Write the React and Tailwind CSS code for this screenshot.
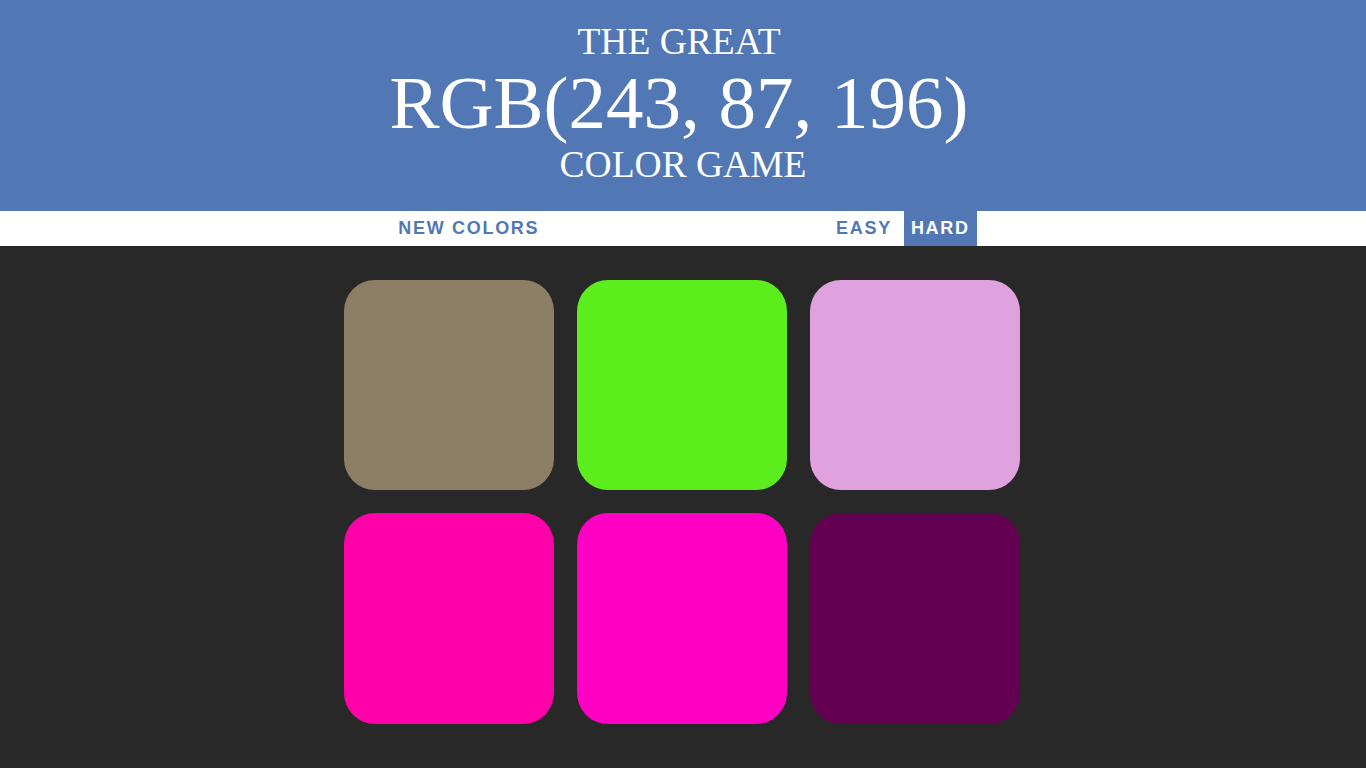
import React from "react";

const squares = ["#8c7f66", "#5ced1c", "#e0a2df", "#ff00a9", "#ff00c4", "#630051"];

function App() {
  return (
    <div className="min-h-screen bg-[#282828]">
      {/* Title */}
      <h1 className="bg-[#5277b5] pt-[22px] pb-[26px] text-center uppercase font-normal text-white font-['Liberation_Serif',serif]">
        <div className="pr-[8px] text-[37.5px] leading-[40px]">The Great</div>
        <div className="pr-[8px] text-[75px] leading-[82.5px]">RGB(243, 87, 196)</div>
        <div className="text-[37.5px] leading-[40px]">Color Game</div>
      </h1>

      {/* Stripe */}
      <div className="flex h-[35px] justify-center bg-white pl-[2px] font-['Liberation_Sans',sans-serif] text-[18px] font-bold uppercase tracking-[1.7px] text-[#5277b5]">
        <button className="px-[7px] uppercase">New Colors</button>
        <span className="ml-[5px] w-[20%]"></span>
        <button className="ml-[5px] px-[7px] uppercase">Easy</button>
        <button className="ml-[5px] bg-[#5277b5] px-[7px] uppercase text-white">Hard</button>
      </div>

      {/* Squares */}
      <div className="mx-auto mt-[34px] grid w-[678px] grid-cols-[repeat(3,210px)] gap-x-[23px] gap-y-[23.4px]">
        {squares.map((c, i) => (
          <div
            key={i}
            className="h-[210.6px] w-[210px] rounded-[31px]"
            style={{ backgroundColor: c }}
          ></div>
        ))}
      </div>
    </div>
  );
}

export default App;
